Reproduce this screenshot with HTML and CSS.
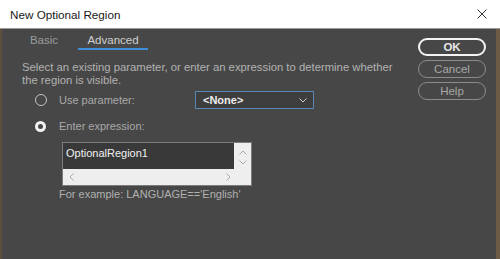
FILE: index.html
```html
<!DOCTYPE html>
<html lang="en">
<head>
  <meta charset="UTF-8">
  <meta name="viewport" content="width=device-width, initial-scale=1.0">
  <title>New Optional Region</title>
  <link rel="stylesheet" href="styles.css">
</head>
<body>
  <div class="window">
    <div class="titlebar">
      <span class="title">New Optional Region</span>
      <svg class="close" width="10" height="10" viewBox="0 0 10 10">
        <path d="M0.5 0.5 L9.5 9.5 M9.5 0.5 L0.5 9.5" stroke="#333" stroke-width="1" fill="none"/>
      </svg>
    </div>

    <div class="dialog">
      <div class="main">
        <div class="tabs">
          <div class="tab">Basic</div>
          <div class="tab active">Advanced</div>
        </div>

        <p class="hint">Select an existing parameter, or enter an expression to determine whether the region is visible.</p>

        <div class="row">
          <span class="radio"></span>
          <label class="label">Use parameter:</label>
          <div class="select">
            <span>&lt;None&gt;</span>
            <svg width="8" height="5" viewBox="0 0 8 5">
              <path d="M0.5 0.5 L4 4 L7.5 0.5" stroke="#ccc" stroke-width="1" fill="none"/>
            </svg>
          </div>
        </div>

        <div class="row second">
          <span class="radio checked"></span>
          <label class="label">Enter expression:</label>
        </div>

        <div class="expr">
          <div class="expr-text">OptionalRegion1</div>
          <div class="vscroll">
            <svg width="8" height="5" viewBox="0 0 8 5"><path d="M0.5 4.5 L4 1 L7.5 4.5" stroke="#aaa" fill="none"/></svg>
            <svg width="8" height="5" viewBox="0 0 8 5"><path d="M0.5 0.5 L4 4 L7.5 0.5" stroke="#aaa" fill="none"/></svg>
          </div>
          <div class="hscroll">
            <svg width="5" height="8" viewBox="0 0 5 8"><path d="M4.5 0.5 L1 4 L4.5 7.5" stroke="#aaa" fill="none"/></svg>
            <svg width="5" height="8" viewBox="0 0 5 8"><path d="M0.5 0.5 L4 4 L0.5 7.5" stroke="#aaa" fill="none"/></svg>
          </div>
          <div class="corner"></div>
        </div>

        <p class="example">For example: LANGUAGE=='English'</p>
      </div>

      <div class="side">
        <button class="btn primary">OK</button>
        <button class="btn">Cancel</button>
        <button class="btn">Help</button>
      </div>
    </div>
  </div>
</body>
</html>
```

FILE: styles.css
```css
* { box-sizing: border-box; }
body { margin: 0; font-family: "Liberation Sans", Arial, sans-serif; font-size: 11px; background: #474747; }
.window { width: 500px; height: 259px; display: flex; flex-direction: column; }
.titlebar { height: 29px; background: #fff; border-bottom: 1px solid #9a9a9a; display: flex; align-items: center; justify-content: space-between; padding: 0 13px 0 10px; }
.title { font-size: 11.7px; color: #1a1a1a; }
.dialog { flex: 1; display: flex; background: #474747; border-left: 2px solid #5e4e3c; border-right: 4px solid #6e5b45; }
.main { flex: 1; padding-left: 20px; }
.tabs { display: flex; gap: 12px; }
.tab { width: 44px; text-align: center; padding: 4px 0 1px; line-height: 14px; border-bottom: 2px solid transparent; color: #9c9c9c; font-size: 11.5px; }
.tab.active { width: 70px; color: #cfcfcf; border-bottom-color: #3f8fd8; }
.hint { margin: 11px 0 0; line-height: 13px; color: #b2b2b2; width: 385px; font-size: 11.3px; }
.row { display: flex; align-items: center; height: 20px; margin-top: 3px; padding-left: 13px; }
.row.second { margin-top: 6px; }
.radio { width: 12px; height: 12px; border-radius: 50%; border: 1.5px solid #c4c4c4; margin-right: 12px; }
.radio.checked { width: 11px; height: 11px; border: 3.5px solid #f2f2f2; margin-right: 13px; }
.label { width: 136px; color: #a9a9a9; }
.select { width: 119px; height: 18px; border: 1px solid #5a86b4; background: #3e3e3e; display: flex; align-items: center; justify-content: space-between; padding: 0 6px 0 7px; color: #ececec; font-weight: bold; }
.expr { margin: 6px 0 0 40px; width: 190px; height: 44px; border: 1px solid #7c7c7c; display: grid; grid-template-columns: 1fr 17px; grid-template-rows: 1fr 16px; }
.expr-text { background: #393939; color: #f0f0f0; padding: 4px 3px; }
.vscroll { background: #eeeeee; display: flex; flex-direction: column; align-items: center; justify-content: space-between; padding: 7px 0 4px; }
.hscroll { background: #eeeeee; display: flex; align-items: center; justify-content: space-between; padding: 0 3px 0 6px; }
.corner { background: #eeeeee; }
.example { margin: 2px 0 0 37px; line-height: 13px; color: #b0b0b0; }
.side { width: 68px; margin-right: 10px; padding-top: 9px; display: flex; flex-direction: column; gap: 4px; }
.btn { height: 18px; border-radius: 9px; border: 1.5px solid #8c8c8c; background: transparent; color: #a8a8a8; font-family: inherit; font-size: 11.5px; padding: 0; }
.btn.primary { border: 2px solid #f4f4f4; color: #e8e8e8; font-weight: bold; }
```
